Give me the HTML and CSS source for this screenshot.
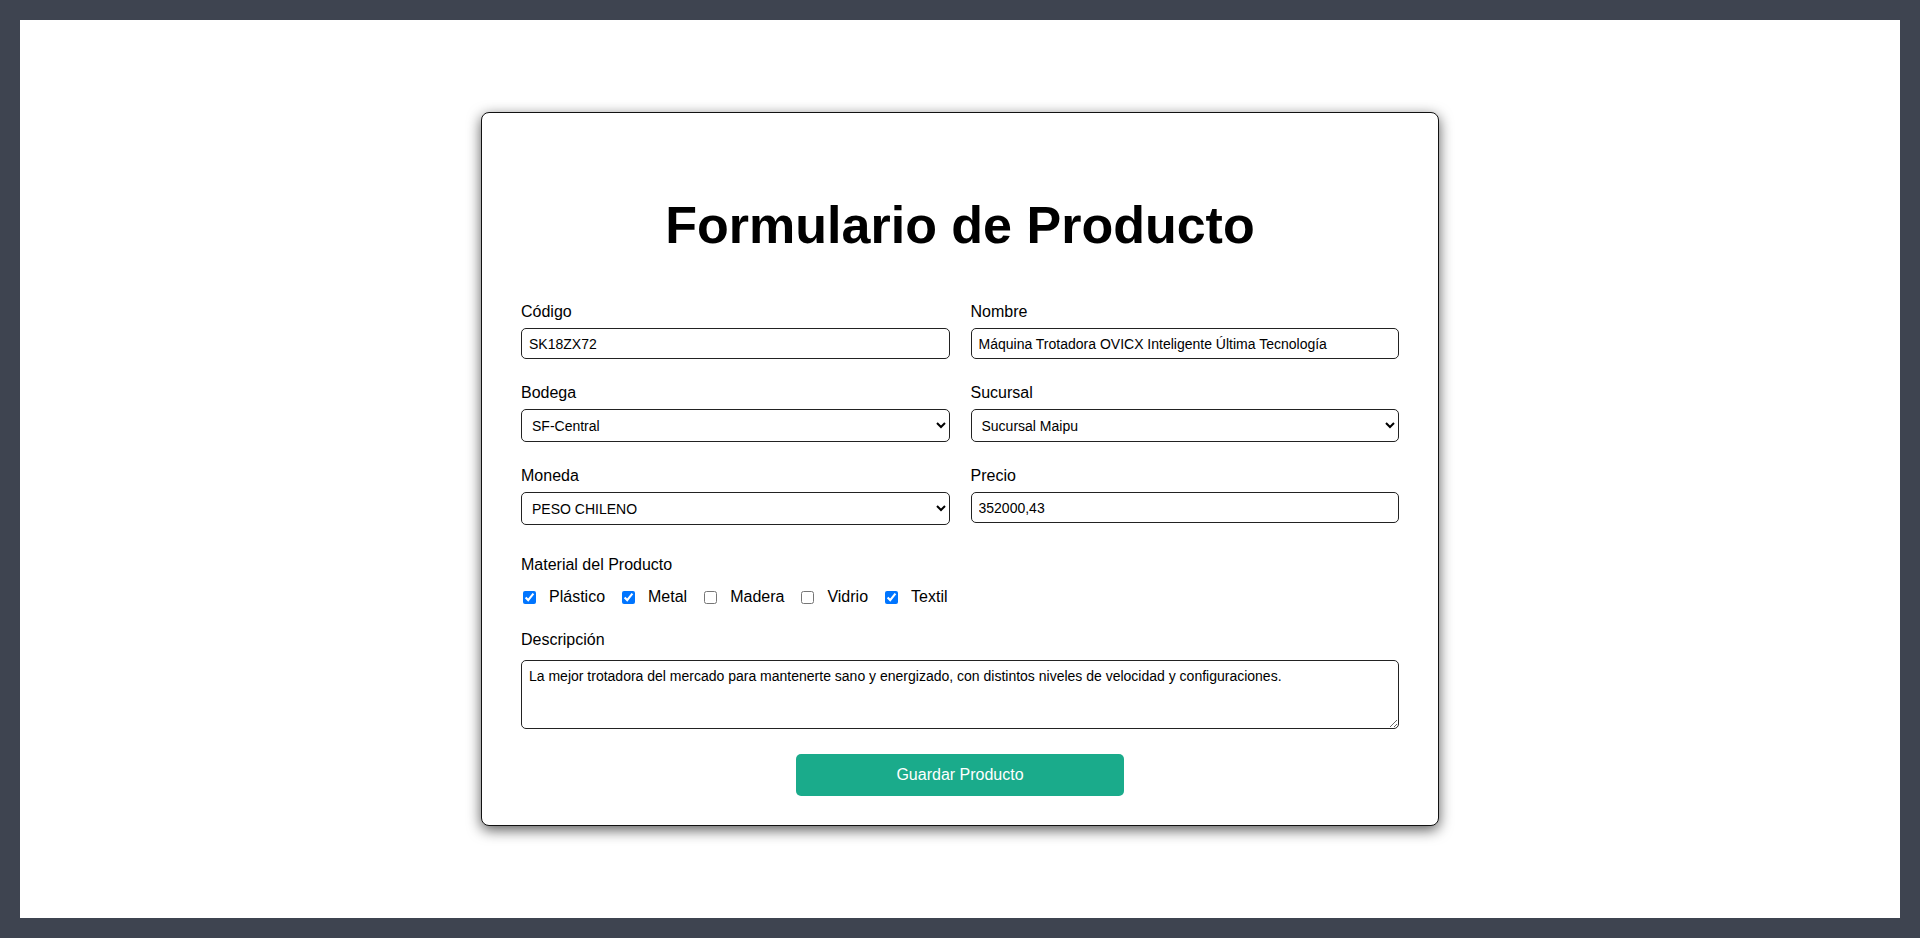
FILE: index.html
```html
<!DOCTYPE html>
<html lang="es">
<head>
<meta charset="utf-8">
<title>Formulario de Producto</title>
<link rel="stylesheet" href="styles.css">
</head>
<body>
<div class="page">
  <form class="card">
    <h1 class="title">Formulario de Producto</h1>
    <div class="grid">
      <div class="field">
        <label class="label" for="codigo">Código</label>
        <input class="control" id="codigo" type="text" value="SK18ZX72">
      </div>
      <div class="field">
        <label class="label" for="nombre">Nombre</label>
        <input class="control" id="nombre" type="text" value="Máquina Trotadora OVICX Inteligente Última Tecnología">
      </div>
      <div class="field">
        <label class="label" for="bodega">Bodega</label>
        <select class="control select" id="bodega">
          <option>SF-Central</option>
        </select>
      </div>
      <div class="field">
        <label class="label" for="sucursal">Sucursal</label>
        <select class="control select" id="sucursal">
          <option>Sucursal Maipu</option>
        </select>
      </div>
      <div class="field">
        <label class="label" for="moneda">Moneda</label>
        <select class="control select" id="moneda">
          <option>PESO CHILENO</option>
        </select>
      </div>
      <div class="field">
        <label class="label" for="precio">Precio</label>
        <input class="control" id="precio" type="text" value="352000,43">
      </div>
    </div>

    <div class="materials">
      <div class="label group-label">Material del Producto</div>
      <div class="checks">
        <label class="check"><input type="checkbox" checked><span>Plástico</span></label>
        <label class="check"><input type="checkbox" checked><span>Metal</span></label>
        <label class="check"><input type="checkbox"><span>Madera</span></label>
        <label class="check"><input type="checkbox"><span>Vidrio</span></label>
        <label class="check"><input type="checkbox" checked><span>Textil</span></label>
      </div>
    </div>

    <div class="desc">
      <label class="label" for="descripcion">Descripción</label>
      <textarea class="textarea" id="descripcion">La mejor trotadora del mercado para mantenerte sano y energizado, con distintos niveles de velocidad y configuraciones.</textarea>
    </div>

    <button class="btn" type="button">Guardar Producto</button>
  </form>
</div>
</body>
</html>
```

FILE: styles.css
```css
* {
  box-sizing: border-box;
}

html, body {
  height: 100%;
}

body {
  margin: 0;
  padding: 20px 20px 20px;
  background: #3e4450;
  font-family: "Liberation Sans", Arial, sans-serif;
  color: #000;
}

.page {
  height: 100%;
  background: #fff;
  display: flex;
  align-items: center;
  justify-content: center;
}

.card {
  width: 958px;
  border: 1px solid #111;
  border-radius: 8px;
  background: #fff;
  box-shadow: 0 4px 14px rgba(0, 0, 0, 0.65);
  padding: 82px 39px 29px;
  display: flex;
  flex-direction: column;
}

.title {
  margin: 0 0 48px;
  font-size: 52px;
  line-height: 60px;
  font-weight: bold;
  text-align: center;
}

.grid {
  display: grid;
  grid-template-columns: 1fr 1fr;
  column-gap: 21px;
  row-gap: 25px;
  margin-bottom: 31px;
}

.field {
  display: flex;
  flex-direction: column;
}

.label {
  display: block;
  font-size: 16px;
  line-height: 18px;
  margin-bottom: 7px;
}

.group-label {
  margin-bottom: 14px;
}

.control {
  height: 31px;
  border: 1px solid #222;
  border-radius: 5px;
  padding: 0 7px;
  font-family: "Liberation Sans", Arial, sans-serif;
  font-size: 14px;
  color: #000;
  background: #fff;
  margin: 0;
}

.select {
  height: 33px;
  padding: 0 4px 0 6px;
}

.materials {
  margin-bottom: 25px;
}

.checks {
  display: flex;
  align-items: center;
  height: 18px;
  font-size: 16px;
}

.check {
  display: flex;
  align-items: center;
  margin-right: 15px;
}

.check input {
  width: 13px;
  height: 13px;
  margin: 0 13px 0 2px;
}

.desc {
  display: flex;
  flex-direction: column;
  margin-bottom: 25px;
}

.desc .label {
  margin-bottom: 11px;
}

.textarea {
  height: 69px;
  border: 1px solid #222;
  border-radius: 5px;
  padding: 7px;
  font-family: "Liberation Sans", Arial, sans-serif;
  font-size: 14px;
  color: #000;
  resize: vertical;
  margin: 0;
}

.btn {
  align-self: center;
  width: 328px;
  height: 42px;
  border: none;
  border-radius: 5px;
  background: #1aab8b;
  color: #fff;
  font-family: "Liberation Sans", Arial, sans-serif;
  font-size: 16px;
  cursor: pointer;
}
```
